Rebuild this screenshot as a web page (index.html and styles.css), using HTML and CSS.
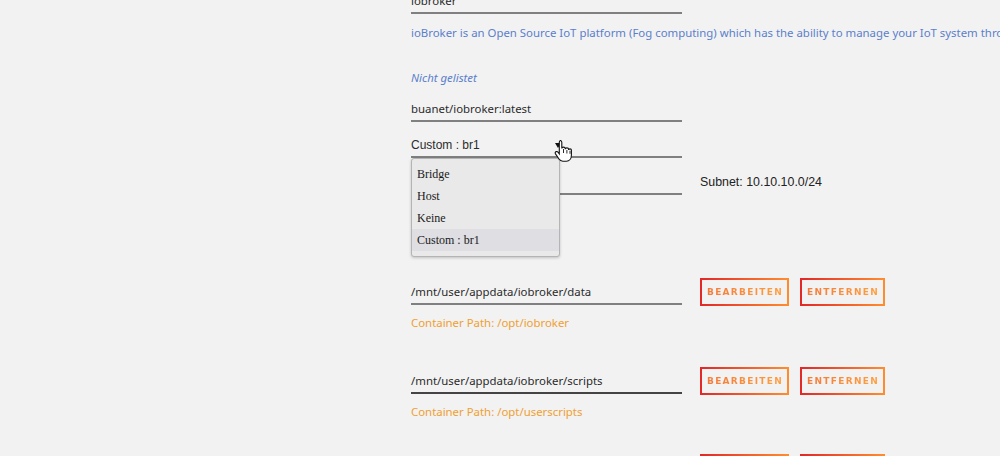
FILE: index.html
```html
<!DOCTYPE html>
<html lang="de">
  <head>
    <meta charset="UTF-8" />
    <meta name="viewport" content="width=device-width, initial-scale=1.0" />
    <title>Docker - iobroker</title>
    <link rel="stylesheet" href="styles.css">
  </head>
  <body>
    <div class="form">
      <div class="field top-field">iobroker</div>
      <div class="desc">ioBroker is an Open Source IoT platform (Fog computing) which has the ability to manage your IoT system through a simple web interface.</div>
      <div class="note">Nicht gelistet</div>
      <div class="field repo">buanet/iobroker:latest</div>

      <div class="select-wrap">
        <div class="field select">
          Custom : br1
          <span class="arrow"></span>
        </div>
        <ul class="dropdown">
          <li>Bridge</li>
          <li>Host</li>
          <li>Keine</li>
          <li class="active">Custom : br1</li>
        </ul>
        <svg class="cursor" width="20" height="24" viewBox="0 0 20 24">
          <path d="M6 1.5c1 0 1.8.8 1.8 1.8v6.2c0-.9.8-1.4 1.7-1.4s1.7.5 1.7 1.4v.8c0-.9.8-1.4 1.7-1.4s1.7.5 1.7 1.4v.8c0-.8.7-1.2 1.4-1.2s1.4.4 1.4 1.2v5.2c0 3.2-2 5.9-5 5.9h-3.6c-1.8 0-3-.9-4-2.4l-3.3-4.9c-.6-.9-.3-2 .7-2.3.8-.2 1.5.1 2 .8l1.1 1.5V3.3c0-1 .8-1.8 1.7-1.8z" fill="#fff" stroke="#111" stroke-width="1.1"/>
          <path d="M9.5 10v4M12.9 11v3.5M16 11.8v3" stroke="#111" stroke-width="0.9"/>
        </svg>
      </div>

      <div class="row network">
        <div class="field"></div>
        <div class="extra">Subnet: 10.10.10.0/24</div>
      </div>

      <div class="row path">
        <div class="field">/mnt/user/appdata/iobroker/data</div>
        <button class="btn"><span>Bearbeiten</span></button>
        <button class="btn"><span>Entfernen</span></button>
      </div>
      <div class="hint">Container Path: /opt/iobroker</div>

      <div class="row path">
        <div class="field focus">/mnt/user/appdata/iobroker/scripts</div>
        <button class="btn"><span>Bearbeiten</span></button>
        <button class="btn"><span>Entfernen</span></button>
      </div>
      <div class="hint">Container Path: /opt/userscripts</div>

      <div class="row path last">
        <div class="field"></div>
        <button class="btn"><span>Bearbeiten</span></button>
        <button class="btn"><span>Entfernen</span></button>
      </div>
    </div>
  </body>
</html>
```

FILE: styles.css
```css
body {
  margin: 0;
  background-color: #f2f2f2;
  font-family: "Noto Sans", sans-serif;
  font-size: 11.4px;
  color: #2b2b2b;
  overflow: hidden;
}
.form {
  padding-left: 411px;
  height: 456px;
  overflow: hidden;
}
.field {
  width: 271px;
  height: 22px;
  line-height: 22px;
  border-bottom: 2px solid #808080;
  box-sizing: content-box;
  white-space: nowrap;
}
.top-field {
  margin-top: -10px;
}
.desc {
  margin-top: 11px;
  line-height: 16px;
  color: #5b7fcc;
  white-space: nowrap;
}
.note {
  margin-top: 29px;
  line-height: 16px;
  color: #5b7fcc;
  font-style: italic;
}
.repo {
  margin-top: 12px;
}
.select-wrap {
  position: relative;
  margin-top: 12px;
}
.select {
  position: relative;
  font-family: "Liberation Sans", sans-serif;
  font-size: 12px;
}
.arrow {
  position: absolute;
  right: 121px;
  top: 9px;
  border-left: 3px solid transparent;
  border-right: 3px solid transparent;
  border-top: 5px solid #111;
}
.dropdown {
  position: absolute;
  left: 0;
  top: 24px;
  width: 147px;
  margin: 0;
  padding: 4px 0 5px;
  list-style: none;
  background-color: #e9e9e9;
  border: 1px solid #b4b4b4;
  border-radius: 3px;
  box-shadow: 0 1px 3px rgba(0, 0, 0, 0.2);
  font-family: "Liberation Serif", serif;
  font-size: 12px;
  color: #1a1a1a;
  z-index: 2;
}
.dropdown li {
  height: 22px;
  line-height: 22px;
  padding-left: 5px;
}
.dropdown li.active {
  background-color: #dedee3;
}
.cursor {
  position: absolute;
  left: 143px;
  top: 5px;
  z-index: 3;
}
.row {
  display: flex;
  align-items: flex-end;
}
.network {
  margin-top: 13px;
}
.extra {
  margin-left: 18px;
  line-height: 22px;
  padding-bottom: 2px;
  font-family: "Liberation Sans", sans-serif;
  font-size: 12.4px;
  color: #222;
}
.path {
  height: 28px;
  margin-top: 83px;
}
.path .field {
  margin-bottom: 1px;
}
.field.focus {
  border-bottom-color: #444;
}
.btn {
  margin-left: 18px;
  height: 28px;
  padding: 0 4px 0 5px;
  background: transparent;
  border: 2px solid;
  border-image: linear-gradient(90deg, #e22828, #ff8c2f) 1;
  cursor: pointer;
  font-family: "DejaVu Sans", sans-serif;
  font-size: 9px;
  font-weight: bold;
  letter-spacing: 1.3px;
  text-transform: uppercase;
}
.btn + .btn {
  margin-left: 11px;
}
.btn span {
  background: linear-gradient(90deg, #f57a3a, #ffa040);
  -webkit-background-clip: text;
  background-clip: text;
  color: transparent;
}
.hint {
  margin-top: 9px;
  line-height: 16px;
  color: #f0a030;
}
.hint + .path {
  margin-top: 36px;
}
.path.last {
  margin-top: 34px;
}
```
